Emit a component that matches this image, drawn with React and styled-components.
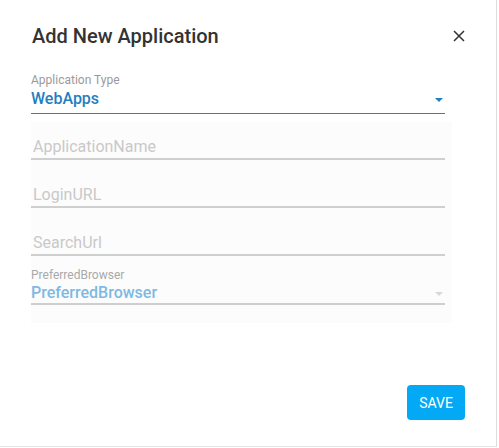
import React from "react";
import styled, { createGlobalStyle } from "styled-components";

const Global = createGlobalStyle`
  html, body { margin: 0; padding: 0; background: #fff; }
  body { font-family: Roboto, "Noto Sans", Arial, sans-serif; }
`;

const Frame = styled.div`
  box-sizing: border-box;
  width: 497px;
  height: 447px;
  background: #fff;
  border-right: 1px solid #dcdcdc;
  border-bottom: 1px solid #e4e4e4;
  display: flex;
  flex-direction: column;
`;

const Header = styled.div`
  display: flex;
  align-items: center;
  justify-content: space-between;
  padding: 24px 32px 0 32px;
  height: 24px;
`;

const Title = styled.h2`
  margin: 0;
  font-size: 20px;
  font-weight: 500;
  color: #333;
  letter-spacing: 0;
`;

const Close = styled.button`
  border: 0;
  background: none;
  padding: 0;
  width: 14px;
  height: 14px;
  display: flex;
  align-items: center;
  justify-content: center;
  cursor: pointer;
  margin-right: -2px;
`;

const Form = styled.div`
  display: flex;
  flex-direction: column;
  padding: 25px 0 0 31px;
`;

const SelectField = styled.div`
  width: 414px;
  display: flex;
  flex-direction: column;
  border-bottom: ${(p) => (p.$active ? "1px solid #1e88c0" : "2px solid #cfcfcf")};
  height: ${(p) => (p.$active ? "41px" : "37px")};
  margin-top: ${(p) => p.$top || "0px"};
  box-sizing: border-box;
`;

const Label = styled.label`
  font-size: 12px;
  color: ${(p) => (p.$muted ? "#a9a9a9" : "#9a9a9a")};
  line-height: 14px;
  height: 14px;
`;

const ValueRow = styled.div`
  display: flex;
  align-items: center;
  justify-content: space-between;
  height: 20px;
  margin-top: ${(p) => p.$top || "2px"};
`;

const Value = styled.span`
  font-size: 16px;
  font-weight: 500;
  color: ${(p) => p.$color};
  line-height: 20px;
`;

const Caret = styled.span`
  width: 0;
  height: 0;
  border-left: 4px solid transparent;
  border-right: 4px solid transparent;
  border-top: 4px solid ${(p) => p.$color};
  margin-right: 2px;
  margin-top: 2px;
`;

const Disabled = styled.div`
  width: 421px;
  background: #fcfcfc;
  margin-top: 8px;
  padding-bottom: 18px;
  display: flex;
  flex-direction: column;
`;

const TextField = styled.div`
  width: 414px;
  height: 38px;
  box-sizing: border-box;
  border-bottom: 2px solid #cfcfcf;
  display: flex;
  align-items: flex-end;
  padding: 0 0 1px 2px;
  margin-top: ${(p) => p.$top || "10px"};
`;

const Placeholder = styled.span`
  font-size: 16px;
  color: #c9c9c9;
  line-height: 20px;
`;

const Spacer = styled.div`
  flex: 1;
`;

const Footer = styled.div`
  display: flex;
  justify-content: flex-end;
  padding: 0 31px 26px 0;
`;

const SaveButton = styled.button`
  width: 58px;
  height: 35px;
  border: 0;
  border-radius: 4px;
  background: #03a9f4;
  color: #fff;
  font-family: Roboto, Arial, sans-serif;
  font-size: 14px;
  font-weight: 400;
  cursor: pointer;
  padding: 0;
`;

export default function App() {
  return (
    <>
      <Global />
      <Frame>
        <Header>
          <Title>Add New Application</Title>
          <Close aria-label="close">
            <svg width="12" height="12" viewBox="0 0 12 12">
              <path d="M1 1 L11 11 M11 1 L1 11" stroke="#333" strokeWidth="1.5" />
            </svg>
          </Close>
        </Header>
        <Form>
          <SelectField $active>
            <Label>Application Type</Label>
            <ValueRow>
              <Value $color="#1f7fc0">WebApps</Value>
              <Caret $color="#1f7fc0" />
            </ValueRow>
          </SelectField>
          <Disabled>
            <TextField $top="0px">
              <Placeholder>ApplicationName</Placeholder>
            </TextField>
            <TextField>
              <Placeholder>LoginURL</Placeholder>
            </TextField>
            <TextField>
              <Placeholder>SearchUrl</Placeholder>
            </TextField>
            <SelectField $top="12px">
              <Label $muted>PreferredBrowser</Label>
              <ValueRow $top="1px">
                <Value $color="#7db9e3">PreferredBrowser</Value>
                <Caret $color="#d8d8d8" />
              </ValueRow>
            </SelectField>
          </Disabled>
        </Form>
        <Spacer />
        <Footer>
          <SaveButton>SAVE</SaveButton>
        </Footer>
      </Frame>
    </>
  );
}
